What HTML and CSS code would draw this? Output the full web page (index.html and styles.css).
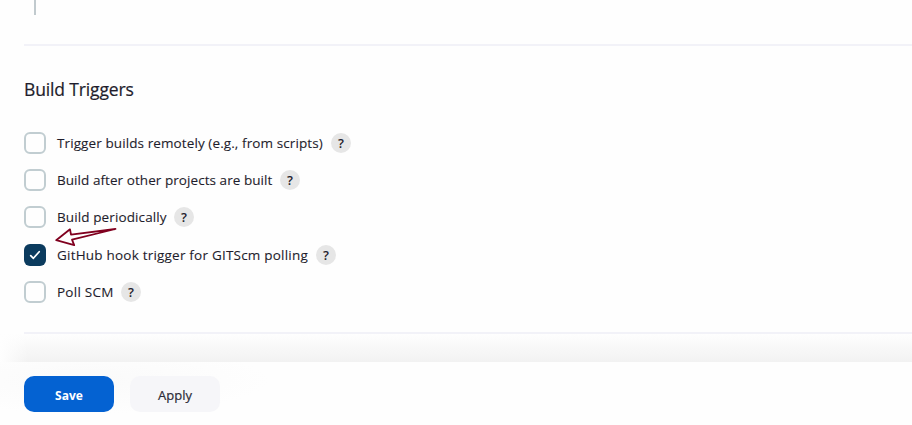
FILE: index.html
```html
<!DOCTYPE html>
<html lang="en">
<head>
<meta charset="utf-8">
<title>Build Triggers</title>
<link rel="stylesheet" href="styles.css">
</head>
<body>
<main class="config">
  <div class="previous-section"><span class="nested-line"></span></div>
  <section class="triggers">
    <h2 class="section-title">Build Triggers</h2>
    <div class="option"><span class="checkbox"></span><span class="label label-remote">Trigger builds remotely (e.g., from scripts)</span><span class="help">?</span></div>
    <div class="option"><span class="checkbox"></span><span class="label label-after">Build after other projects are built</span><span class="help">?</span></div>
    <div class="option"><span class="checkbox"></span><span class="label label-periodic">Build periodically</span><span class="help">?</span></div>
    <div class="option">
      <span class="checkbox checked"><svg width="22" height="22" viewBox="0 0 22 22"><path d="M6.7 11.6l2.7 2.7 5.8-6.6" fill="none" stroke="#fff" stroke-width="1.7" stroke-linecap="round" stroke-linejoin="round"/></svg></span><span class="label label-github">GitHub hook trigger for GITScm polling</span><span class="help">?</span>
      <svg class="arrow" width="66" height="22" viewBox="0 0 66 22"><path d="M63.5 3L19 8.7L18 3.3L4.2 14.2L22.2 19.2L20 13.7Z" fill="none" stroke="#80001f" stroke-width="1.8" stroke-linejoin="round"/></svg>
    </div>
    <div class="option"><span class="checkbox"></span><span class="label label-poll">Poll SCM</span><span class="help">?</span></div>
  </section>
</main>
<div class="fade"></div>
<footer class="actions">
  <button class="button save">Save</button>
  <button class="button apply">Apply</button>
</footer>
</body>
</html>
```
FILE: styles.css
```css
* { box-sizing: border-box; }
body {
  margin: 0;
  height: 425px;
  overflow: hidden;
  display: flex;
  flex-direction: column;
  background: #fefefe;
  color: #1e1d2c;
  font-family: "Open Sans", "Noto Sans", sans-serif;
}
.config { padding-left: 24px; height: 334px; flex: none; }
.previous-section { height: 46px; border-bottom: 2px solid #f2f2f8; }
.nested-line { display: block; width: 2px; height: 15px; margin-left: 10px; background: #c1cace; }
.triggers { height: 288px; border-bottom: 2px solid #f2f2f8; }
.section-title {
  margin: 0;
  padding-top: 31px;
  height: 78.3px;
  font-size: 17.5px;
  line-height: 24px;
  font-weight: 400;
  letter-spacing: -0.14px;
  -webkit-text-stroke: 0.2px;
}
.option { position: relative; display: flex; align-items: center; height: 37.25px; }
.checkbox {
  width: 22px;
  height: 22px;
  flex: none;
  margin-right: 11px;
  border: 2px solid #c1cdd1;
  border-radius: 6px;
}
.checked { border: 0; background: #0b3b5e; }
.checked svg { display: block; }
.label {
  font-size: 13.5px;
  line-height: 20px;
  font-weight: 500;
  white-space: nowrap;
  -webkit-text-stroke: 0.1px;
}
.label-remote { width: 274px; letter-spacing: 0.1px; }
.label-after { width: 223px; letter-spacing: 0.06px; }
.label-periodic { width: 117px; letter-spacing: 0.11px; }
.label-github { width: 259px; letter-spacing: 0.21px; }
.label-poll { width: 64px; letter-spacing: 0.25px; }
.help {
  width: 20px;
  height: 20px;
  border-radius: 50%;
  background: #e6e6e6;
  text-align: center;
  font-size: 13px;
  line-height: 20px;
  font-weight: 600;
}
.arrow { position: absolute; left: 28px; top: -10px; }
.fade {
  height: 28px;
  flex: none;
  background: linear-gradient(90deg, #fefefe, rgba(254,254,254,0) 28px), linear-gradient(#fefefe, #f2f2f2);
}
.actions {
  display: flex;
  gap: 16px;
  flex: 1;
  padding: 14px 24px;
  background: radial-gradient(ellipse 180px 34px at 90px 18px, #fafafa, #fefefe);
}
.button {
  width: 90px;
  height: 36px;
  padding: 2px 0 0;
  border: 0;
  border-radius: 10px;
  font: 500 13px/20px "Open Sans", "Noto Sans", sans-serif;
}
.save { background: #0462d2; color: #fff; font-weight: 700; font-size: 12px; padding-top: 3px; }
.apply { background: #f6f6f9; color: #2c2b37; -webkit-text-stroke: 0.2px; }
```
